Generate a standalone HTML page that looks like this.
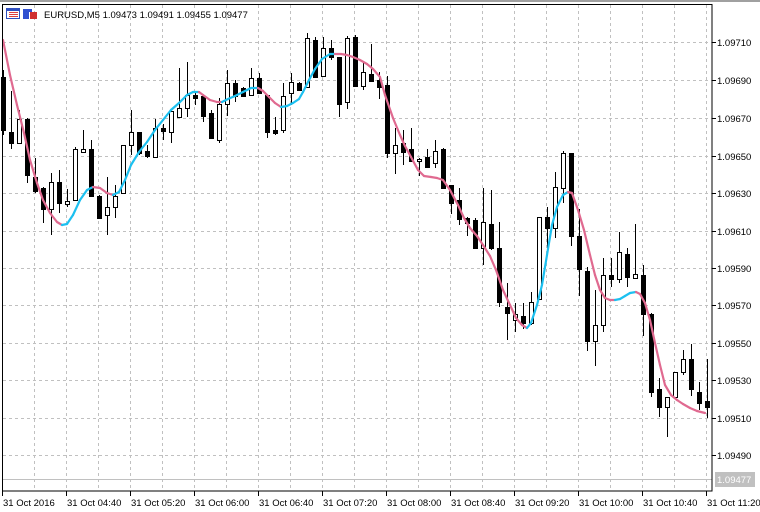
<!DOCTYPE html>
<html><head><meta charset="utf-8"><style>
html,body{margin:0;padding:0;background:#fff;width:760px;height:512px;overflow:hidden}
svg{display:block}
text{font-family:"Liberation Sans",sans-serif;font-size:9.5px;fill:#000}
</style></head><body>
<svg id="s" width="760" height="512" xmlns="http://www.w3.org/2000/svg" shape-rendering="crispEdges">
<rect x="0" y="0" width="760" height="2" fill="#a0a0a0"/>
<g id="grid"></g>
<line x1="3" y1="479.5" x2="712" y2="479.5" stroke="#c0c0c0"/>
<g id="candles"></g>
<g id="ma" shape-rendering="auto"></g>
<rect x="2.5" y="4.5" width="709.5" height="486.5" fill="none" stroke="#000"/>
<g id="axis"></g>
<rect x="715" y="472" width="40" height="15" fill="#c0c0c0"/>
<text x="717" y="483" style="fill:#fff">1.09477</text>
<!-- icons -->
<rect x="6.5" y="8.5" width="13" height="10" fill="#fff" stroke="#3050c0"/>
<rect x="7" y="9" width="12" height="2" fill="#3050c0"/>
<rect x="9" y="12" width="9" height="1" fill="#e04040"/>
<rect x="9" y="14" width="9" height="1" fill="#e04040"/>
<rect x="9" y="16" width="9" height="1" fill="#e04040"/>
<rect x="23" y="9" width="6" height="10" fill="#3050d0"/>
<rect x="30" y="12" width="7" height="7" fill="#d03030"/>
<rect x="29" y="9" width="3" height="3" fill="#3050d0"/>
<text x="44" y="18">EURUSD,M5  1.09473 1.09491 1.09455 1.09477</text>
</svg>
<script>
var NS="http://www.w3.org/2000/svg";
function el(p,t,a,txt){var e=document.createElementNS(NS,t);for(var k in a)e.setAttribute(k,a[k]);if(txt)e.textContent=txt;document.getElementById(p).appendChild(e);return e;}
var hy=[42,80,118,156,193,231,268,305,343,380,418,455];
var lab=["1.09710","1.09690","1.09670","1.09650","1.09630","1.09610","1.09590","1.09570","1.09550","1.09530","1.09510","1.09490"];
hy.forEach(function(y,i){
 el("grid","line",{x1:3,y1:y+.5,x2:712,y2:y+.5,stroke:"#c0c0c0","stroke-dasharray":"3,3"});
 el("axis","line",{x1:712,y1:y+.5,x2:716,y2:y+.5,stroke:"#000"});
 el("axis","text",{x:717,y:y+4},lab[i]);
});
for(var x=34;x<=706;x+=32){el("grid","line",{x1:x+.5,y1:5,x2:x+.5,y2:491,stroke:"#c0c0c0","stroke-dasharray":"3,3"});}
var bl=["31 Oct 2016","31 Oct 04:40","31 Oct 05:20","31 Oct 06:00","31 Oct 06:40","31 Oct 07:20","31 Oct 08:00","31 Oct 08:40","31 Oct 09:20","31 Oct 10:00","31 Oct 10:40","31 Oct 11:20"];
bl.forEach(function(t,i){var x=2+64*i;el("axis","line",{x1:x+.5,y1:491,x2:x+.5,y2:496,stroke:"#000"});el("axis","text",{x:x+1,y:506},t);});
// [center, high, low, bodyTop, bodyBot, bull]
var C=[[3,70,135,77,130,0],[11,91,149,132,143,0],[19,110,143,119,143,1],[27,118,183,119,175,0],[35,158,193,177,191,0],[43,187,223,188,209,0],[51,173,235,182,209,1],[59,170,213,182,203,0],[67,189,207,201,204,1],[75,147,200,149,200,1],[83,130,153,149,152,1],[91,140,197,149,196,0],[99,195,218,196,218,0],[107,177,235,207,215,1],[115,185,218,196,207,1],[123,145,193,145,193,1],[131,110,155,132,145,1],[139,132,155,132,153,0],[147,145,158,151,156,0],[155,119,158,128,157,1],[163,124,140,128,131,0],[171,110,143,111,132,1],[179,68,117,108,117,1],
[187,62,117,95,108,1],[195,92,105,95,98,0],[203,96,122,96,116,0],[211,110,139,113,138,0],[219,98,143,104,140,1],[227,70,116,83,104,1],[235,80,102,83,96,0],[243,87,97,88,96,0],[251,68,96,78,95,1],[259,73,93,78,93,0],[267,95,138,95,132,0],[275,117,135,130,133,0],[283,83,133,96,130,1],[291,73,105,82,93,1],[299,82,90,83,90,0],[307,33,87,38,87,1],[315,37,77,40,77,0],[323,37,77,48,76,1],[331,40,60,48,57,0],[339,57,117,57,104,0],[347,36,109,38,102,1],
[355,35,86,37,86,0],[363,62,90,72,86,1],[371,44,82,74,81,0],[379,72,99,80,87,0],[387,76,158,85,153,0],[395,128,174,145,153,1],[403,130,165,143,152,0],[411,128,161,149,161,0],[419,158,176,159,161,1],[427,149,167,157,167,0],[435,140,168,151,163,1],[443,148,188,149,188,0],[451,185,214,185,203,0],[459,188,225,200,219,0],[467,217,236,218,223,0],[475,218,248,220,248,0],[483,188,265,222,248,1],[491,190,250,224,248,0],[499,222,307,248,302,0],[507,283,340,307,313,0],[515,303,332,314,320,1],[523,303,329,316,323,0],
[531,292,325,302,323,1],[539,217,299,217,299,1],[547,207,251,217,228,0],[555,172,238,187,228,1],[563,151,203,153,188,1],[571,153,246,153,236,0],[579,209,296,236,269,0],[587,267,351,271,341,0],[595,290,366,325,341,1],[603,258,332,275,325,1],[611,258,287,275,279,0],[619,232,283,252,279,1],[627,248,287,254,277,0],[635,224,277,274,278,1],[643,265,336,275,314,0],[651,313,397,314,392,0],[659,378,417,389,407,0],[667,397,437,397,407,1],[675,372,398,372,397,1],[683,350,375,359,372,1],[691,344,396,359,389,0],[699,382,410,392,403,0],[707,359,418,401,407,0]];
C.forEach(function(c){
 var x=c[0];
 el("candles","rect",{x:x,y:c[1],width:1,height:c[2]-c[1],fill:"#000"});
 var h=Math.max(1,c[4]-c[3]);
 el("candles","rect",{x:x-2,y:c[3],width:5,height:h+1,fill:"#000"});
 if(c[5]&&h>=2)el("candles","rect",{x:x-1,y:c[3]+1,width:3,height:h-1,fill:"#fff"});
});
var P=[[3,40],[10,75],[17,105],[24,133],[30,160],[37,183],[43,200],[50,213],[57,222],[62,225],[67,224],[73,215],[80,200],[87,190],[93,187],[100,188],[107,193],[113,195],[119,192],[125,180],[131,165],[139,152],[147,142],[155,130],[163,120],[171,110],[179,103],[187,95],[193,92],[199,92],[203,95],[210,100],[217,102],[222,102],[228,99],[235,96],[243,92],[251,88],[258,88],[263,91],[269,97],[275,103],[281,107],[287,106],[293,103],[299,99],[303,92],[309,80],[315,69],[322,59],[330,54],[335,54],[341,54],[347,55],[353,57],[360,60],[367,64],[373,69],[380,77],[385,95],[393,118],[400,135],[405,146],[411,157],[418,170],[424,176],[431,177],[437,178],[443,180],[450,190],[458,205],[464,218],[470,228],[477,236],[483,245],[490,256],[496,270],[503,290],[510,305],[516,318],[522,325],[527,328],[531,323],[537,305],[542,285],[547,255],[552,225],[557,207],[563,195],[568,192],[572,193],[578,210],[584,230],[590,255],[595,275],[600,290],[605,298],[610,300],[615,300],[620,299],[625,296],[630,293],[636,292],[640,294],[645,303],[650,320],[655,343],[660,365],[665,385],[671,395],[677,400],[683,404],[690,408],[697,411],[705,413]];
for(var i=1;i<P.length;i++){
 var up=P[i][1]<P[i-1][1]||(P[i][1]==P[i-1][1]&&i>1&&P[i-1][1]<P[i-2][1]);
 el("ma","line",{x1:P[i-1][0],y1:P[i-1][1],x2:P[i][0],y2:P[i][1],stroke:up?"#1cc0f0":"#e06a90","stroke-width":2.2,"stroke-linecap":"round"});
}
</script>
</body></html>
